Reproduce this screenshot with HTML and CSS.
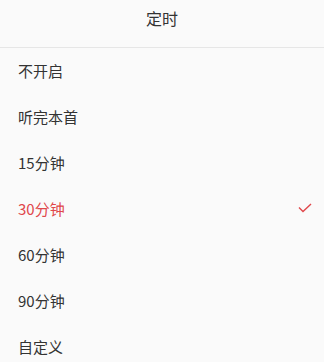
FILE: index.html
```html
<!DOCTYPE html>
<html lang="zh-CN">
<head>
    <meta charset="UTF-8">
    <meta name="viewport" content="width=device-width, initial-scale=1.0">
    <title>定时</title>
    <link rel="stylesheet" href="styles.css">
</head>
<body>
    <div class="sheet">
        <div class="sheet-title">定时</div>
        <ul class="option-list">
            <li class="option">不开启</li>
            <li class="option">听完本首</li>
            <li class="option">15分钟</li>
            <li class="option active">
                <span>30分钟</span>
                <svg class="check" width="14" height="10" viewBox="0 0 14 10">
                    <path d="M1 4.5 L5 8.5 L13 1" fill="none" stroke="currentColor" stroke-width="1.4"/>
                </svg>
            </li>
            <li class="option">60分钟</li>
            <li class="option">90分钟</li>
            <li class="option">自定义</li>
        </ul>
    </div>
</body>
</html>
```

FILE: styles.css
```css
* {
    margin: 0;
    padding: 0;
    box-sizing: border-box;
}

body {
    font-family: "Noto Sans CJK SC", "Noto Sans", sans-serif;
    background: #fafafa;
    color: #333333;
    overflow: hidden;
}

.sheet-title {
    height: 48px;
    line-height: 36px;
    text-align: center;
    font-size: 16px;
    color: #333333;
    border-bottom: 1px solid #e6e6e6;
}

.option-list {
    list-style: none;
}

.option {
    height: 46px;
    padding: 0 12px 2px 18px;
    display: flex;
    align-items: center;
    justify-content: space-between;
    font-size: 15px;
}

.option.active {
    color: #e0474b;
}

.check {
    color: #e0474b;
}
```
